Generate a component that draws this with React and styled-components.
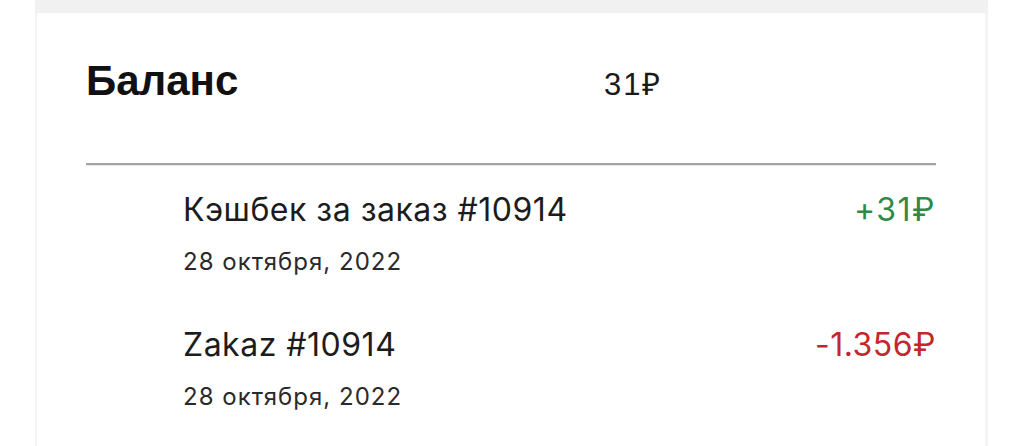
import React from "react";
import styled, { createGlobalStyle } from "styled-components";

const Global = createGlobalStyle`
  html, body { margin: 0; padding: 0; background: #ffffff; }
  body { font-family: "Inter", "Roboto", sans-serif; }
`;

const Page = styled.div`
  width: 1024px;
  height: 446px;
  overflow: hidden;
  background: #ffffff;
`;

const Column = styled.div`
  margin-left: 35px;
  width: 953px;
  height: 100%;
  display: flex;
  flex-direction: column;
`;

const TopBand = styled.div`
  height: 13px;
  background: #f1f1f1;
  flex: none;
`;

const Card = styled.section`
  flex: 1;
  background: #ffffff;
  border-left: 2px solid #f3f3f3;
  border-right: 3px solid #f3f3f3;
  padding: 0 49px 0 49px;
`;

const Header = styled.header`
  display: grid;
  grid-template-columns: 518px 1fr;
  align-items: center;
  height: 134px;
  padding-bottom: 16px;
  border-bottom: 2px solid #a4a4a4;
  box-shadow: 0 1px 0 rgba(0, 0, 0, 0.1);
`;

const Title = styled.h1`
  margin: 0;
  padding-top: 2px;
  font-family: "Liberation Sans", Arial, sans-serif;
  font-weight: 700;
  font-size: 42px;
  color: #111111;
  letter-spacing: 0;
`;

const Balance = styled.div`
  font-family: "Liberation Sans", Arial, sans-serif;
  font-size: 31px;
  color: #1a1a1a;
  letter-spacing: 2px;
  padding-top: 6px;
`;

const List = styled.ul`
  list-style: none;
  margin: 0;
  padding: 0 0 0 97px;
`;

const Row = styled.li`
  display: grid;
  grid-template-columns: 1fr auto;
  padding-top: 26px;
  height: 109px;
`;

const Info = styled.div`
  display: flex;
  flex-direction: column;
  gap: 18px;
`;

const Name = styled.div`
  font-size: 32px;
  line-height: 38px;
  color: #1c1c1c;
  letter-spacing: 0.5px;
`;

const DateText = styled.div`
  font-size: 24px;
  line-height: 30px;
  color: #2a2a2a;
  letter-spacing: 1px;
`;

const Amount = styled.div`
  font-size: 32px;
  line-height: 38px;
  color: ${(p) => (p.$positive ? "#2f8a45" : "#c1272d")};
  letter-spacing: ${(p) => (p.$positive ? "1.5px" : "0.5px")};
`;

const items = [
  { name: "Кэшбек за заказ #10914", date: "28 октября, 2022", amount: "+31₽", positive: true },
  { name: "Zakaz #10914", date: "28 октября, 2022", amount: "-1.356₽", positive: false },
];

export default function App() {
  return (
    <>
      <Global />
      <Page>
        <Column>
          <TopBand />
          <Card>
            <Header>
              <Title>Баланс</Title>
              <Balance>31₽</Balance>
            </Header>
            <List>
              {items.map((it, i) => (
                <Row key={i}>
                  <Info>
                    <Name>{it.name}</Name>
                    <DateText>{it.date}</DateText>
                  </Info>
                  <Amount $positive={it.positive}>{it.amount}</Amount>
                </Row>
              ))}
            </List>
          </Card>
        </Column>
      </Page>
    </>
  );
}
